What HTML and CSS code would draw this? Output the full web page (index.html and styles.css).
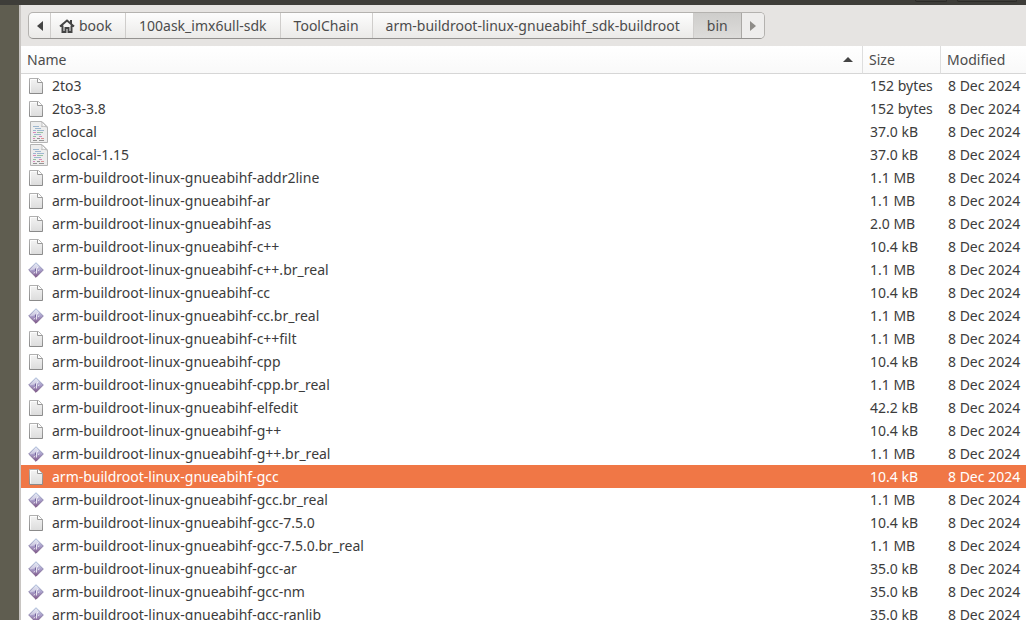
FILE: index.html
```html
<!doctype html>
<html lang="en">
<head>
<meta charset="utf-8"/>
<title>bin</title>
<link rel="stylesheet" href="styles.css">
</head>
<body>
<svg class="defs" aria-hidden="true">
	<defs>
		<linearGradient id="paper" x1="0" y1="0" x2="0" y2="1">
			<stop offset="0" stop-color="#f4f4f4"/>
			<stop offset="1" stop-color="#dcdcdc"/>
		</linearGradient>
		<linearGradient id="edge" x1="0" y1="0" x2="0" y2="1">
			<stop offset="0" stop-color="#b0b0b0"/>
			<stop offset="1" stop-color="#8a8a8a"/>
		</linearGradient>
		<linearGradient id="gem" x1="0" y1="0" x2="0" y2="1">
			<stop offset="0" stop-color="#d9e3f2"/>
			<stop offset="0.5" stop-color="#aaa0cb"/>
			<stop offset="1" stop-color="#7d5588"/>
		</linearGradient>
		<linearGradient id="gemEdge" x1="0" y1="0" x2="0" y2="1">
			<stop offset="0" stop-color="#a9bddb"/>
			<stop offset="1" stop-color="#75507f"/>
		</linearGradient>
	</defs>
	<symbol id="file" viewBox="0 0 16 16">
		<path d="M1.5 .5H10.500L14.500 4.500V15.500H1.500Z" fill="url(#paper)" stroke="url(#edge)"/>
		<path d="M2.500 14.500V1.500H9" fill="none" stroke="#fff" opacity=".8"/>
		<path d="M9.500 .5V4.500H14.500" fill="#fff" stroke="#999"/>
	</symbol>
	<symbol id="text" viewBox="0 0 20 22">
		<path d="M2.500 .5H14L19.500 6V21.500H2.500Z" fill="#ededed" stroke="#b4b4b4"/>
		<path d="M13.500 .5C14.500 3 14 5 13.500 5.500C16 5 18 5.500 19.500 6.500Z" fill="#fff" stroke="#bbb"/>
		<g fill="none" opacity=".75">
			<path d="M5 5.500H11M7 7.500H13M5 9.500H8M9 9.500H16M6 13.500H13" stroke="#83a6c6"/>
			<path d="M5 11.500H8M11 15.500H14M5 17.500H7" stroke="#d16aab"/>
			<path d="M9 11.500H15M5 15.500H8" stroke="#7db28a"/>
			<path d="M5 19.500H9M11 19.500H16M9 17.500H12" stroke="#777"/>
			<path d="M13 17.500H16" stroke="#d77878"/>
		</g>
	</symbol>
	<symbol id="exec" viewBox="0 0 16 16">
		<path d="M8 .7L15.300 8L8 15.300L.7 8Z" fill="url(#gem)" stroke="url(#gemEdge)" stroke-linejoin="round"/>
		<path d="M8 1.500L1.500 8C5 9 8 6 11.500 5Z" fill="#fff" opacity=".4"/>
		<path d="M10 5L8.500 7V11.500M6.500 10L6 11.500M11 7.500L10.500 9" fill="none" stroke="#fff" opacity=".75"/>
		<path d="M7.500 6.500V9" fill="none" stroke="#75659c"/>
	</symbol>
</svg>
<div class="desktop">
	<div class="titlebar"><span class="tool"></span><span class="tool wide"></span></div>
	<main class="window">
		<nav class="toolbar" aria-label="Location">
			<div class="path">
				<button class="arrow" aria-label="Back"><svg width="6" height="10" viewBox="0 0 6 10"><path d="M6 0V10L0 5Z" fill="#444"/></svg></button>
				<button class="home"><svg width="16" height="14" viewBox="0 0 16 14"><path d="M1 7.500L8 1.500L15 7.500M3.500 6.500V13H6.500V9H9.500V13H12.500V6.500" fill="none" stroke="#444" stroke-width="2"/><path d="M11 1H13V5H11Z" fill="#444"/></svg>book</button>
				<button>100ask_imx6ull-sdk</button>
				<button>ToolChain</button>
				<button>arm-buildroot-linux-gnueabihf_sdk-buildroot</button>
				<button class="current">bin</button>
				<button class="arrow next" aria-label="Forward"><svg width="6" height="10" viewBox="0 0 6 10"><path d="M0 0V10L6 5Z" fill="#8e8c88"/></svg></button>
			</div>
		</nav>
		<table class="files">
			<colgroup><col><col class="col-size"><col class="col-date"></colgroup>
			<thead>
				<tr>
					<th><button class="sort">Name<svg width="10" height="5" viewBox="0 0 10 5"><path d="M0 5L5 0L10 5Z" fill="#444"/></svg></button></th>
					<th><button class="sort">Size</button></th>
					<th><button class="sort">Modified</button></th>
				</tr>
			</thead>
			<tbody>
				<tr><td><span class="name"><svg class="icon"><use href="#file"/></svg>2to3</span></td><td>152 bytes</td><td>8 Dec 2024</td></tr>
				<tr><td><span class="name"><svg class="icon"><use href="#file"/></svg>2to3-3.8</span></td><td>152 bytes</td><td>8 Dec 2024</td></tr>
				<tr><td><span class="name"><svg class="icon text"><use href="#text"/></svg>aclocal</span></td><td>37.0 kB</td><td>8 Dec 2024</td></tr>
				<tr><td><span class="name"><svg class="icon text"><use href="#text"/></svg>aclocal-1.15</span></td><td>37.0 kB</td><td>8 Dec 2024</td></tr>
				<tr><td><span class="name"><svg class="icon"><use href="#file"/></svg>arm-buildroot-linux-gnueabihf-addr2line</span></td><td>1.1 MB</td><td>8 Dec 2024</td></tr>
				<tr><td><span class="name"><svg class="icon"><use href="#file"/></svg>arm-buildroot-linux-gnueabihf-ar</span></td><td>1.1 MB</td><td>8 Dec 2024</td></tr>
				<tr><td><span class="name"><svg class="icon"><use href="#file"/></svg>arm-buildroot-linux-gnueabihf-as</span></td><td>2.0 MB</td><td>8 Dec 2024</td></tr>
				<tr><td><span class="name"><svg class="icon"><use href="#file"/></svg>arm-buildroot-linux-gnueabihf-c++</span></td><td>10.4 kB</td><td>8 Dec 2024</td></tr>
				<tr><td><span class="name"><svg class="icon"><use href="#exec"/></svg>arm-buildroot-linux-gnueabihf-c++.br_real</span></td><td>1.1 MB</td><td>8 Dec 2024</td></tr>
				<tr><td><span class="name"><svg class="icon"><use href="#file"/></svg>arm-buildroot-linux-gnueabihf-cc</span></td><td>10.4 kB</td><td>8 Dec 2024</td></tr>
				<tr><td><span class="name"><svg class="icon"><use href="#exec"/></svg>arm-buildroot-linux-gnueabihf-cc.br_real</span></td><td>1.1 MB</td><td>8 Dec 2024</td></tr>
				<tr><td><span class="name"><svg class="icon"><use href="#file"/></svg>arm-buildroot-linux-gnueabihf-c++filt</span></td><td>1.1 MB</td><td>8 Dec 2024</td></tr>
				<tr><td><span class="name"><svg class="icon"><use href="#file"/></svg>arm-buildroot-linux-gnueabihf-cpp</span></td><td>10.4 kB</td><td>8 Dec 2024</td></tr>
				<tr><td><span class="name"><svg class="icon"><use href="#exec"/></svg>arm-buildroot-linux-gnueabihf-cpp.br_real</span></td><td>1.1 MB</td><td>8 Dec 2024</td></tr>
				<tr><td><span class="name"><svg class="icon"><use href="#file"/></svg>arm-buildroot-linux-gnueabihf-elfedit</span></td><td>42.2 kB</td><td>8 Dec 2024</td></tr>
				<tr><td><span class="name"><svg class="icon"><use href="#file"/></svg>arm-buildroot-linux-gnueabihf-g++</span></td><td>10.4 kB</td><td>8 Dec 2024</td></tr>
				<tr><td><span class="name"><svg class="icon"><use href="#exec"/></svg>arm-buildroot-linux-gnueabihf-g++.br_real</span></td><td>1.1 MB</td><td>8 Dec 2024</td></tr>
				<tr class="selected"><td><span class="name"><svg class="icon"><use href="#file"/></svg>arm-buildroot-linux-gnueabihf-gcc</span></td><td>10.4 kB</td><td>8 Dec 2024</td></tr>
				<tr><td><span class="name"><svg class="icon"><use href="#exec"/></svg>arm-buildroot-linux-gnueabihf-gcc.br_real</span></td><td>1.1 MB</td><td>8 Dec 2024</td></tr>
				<tr><td><span class="name"><svg class="icon"><use href="#file"/></svg>arm-buildroot-linux-gnueabihf-gcc-7.5.0</span></td><td>10.4 kB</td><td>8 Dec 2024</td></tr>
				<tr><td><span class="name"><svg class="icon"><use href="#exec"/></svg>arm-buildroot-linux-gnueabihf-gcc-7.5.0.br_real</span></td><td>1.1 MB</td><td>8 Dec 2024</td></tr>
				<tr><td><span class="name"><svg class="icon"><use href="#exec"/></svg>arm-buildroot-linux-gnueabihf-gcc-ar</span></td><td>35.0 kB</td><td>8 Dec 2024</td></tr>
				<tr><td><span class="name"><svg class="icon"><use href="#exec"/></svg>arm-buildroot-linux-gnueabihf-gcc-nm</span></td><td>35.0 kB</td><td>8 Dec 2024</td></tr>
				<tr><td><span class="name"><svg class="icon"><use href="#exec"/></svg>arm-buildroot-linux-gnueabihf-gcc-ranlib</span></td><td>35.0 kB</td><td>8 Dec 2024</td></tr>
			</tbody>
		</table>
	</main>
</div>
</body>
</html>
```
FILE: styles.css
```css
* {
	box-sizing: border-box;
}
body {
	margin: 0;
	font: 14px/23px "Noto Sans", "Open Sans", sans-serif;
	color: #3c3c3c;
	background: #5f5d50;
}
button {
	margin: 0;
	border: none;
	background: none;
	font: inherit;
	color: #4c4c4c;
	white-space: nowrap;
}
.defs {
	position: absolute;
	width: 0;
	height: 0;
}
.desktop {
	height: 100vh;
	overflow: hidden;
}
.titlebar {
	display: flex;
	justify-content: flex-end;
	gap: 10px;
	height: 5px;
	padding-right: 9px;
	background: #3e3d39;
}
.tool {
	width: 32px;
	height: 2px;
	border: 1px solid #2c2b28;
	border-top: none;
	border-radius: 0 0 3px 3px;
}
.wide {
	width: 60px;
}
.window {
	margin-left: 19px;
	border-left: 2px solid #c8c5c2;
	background: #fff;
}
.toolbar {
	display: flex;
	height: 41px;
	padding: 7px;
	background: #e6e4e2;
}
.path {
	display: flex;
	border: 1px solid #b4b2af;
	border-bottom-color: #949290;
	border-radius: 5px;
	background: linear-gradient(#fdfdfd, #ebeae8);
	overflow: hidden;
}
.path button {
	display: flex;
	align-items: center;
	justify-content: center;
	padding: 0 13px;
	border-right: 1px solid #cfcdcb;
}
.path .arrow {
	width: 22px;
	padding: 0;
}
.path .home {
	gap: 4px;
	padding: 0 13px 0 8px;
}
.path .current {
	border-right-color: #aaa8a5;
	background: linear-gradient(#cecdcb, #dddcda);
}
.path .next {
	border-right: none;
	background: #eeedec;
}
.files {
	width: 100%;
	table-layout: fixed;
	border-collapse: separate;
	border-spacing: 0;
}
.col-size {
	width: 78px;
}
.col-date {
	width: 86px;
}
th {
	height: 28px;
	padding: 0;
	border-bottom: 1px solid #d6d6d6;
	background: linear-gradient(#fff, #f9f9f9);
	font-weight: normal;
}
th + th {
	border-left: 1px solid #dedede;
}
.sort {
	display: flex;
	align-items: center;
	justify-content: space-between;
	width: 100%;
	padding: 0 9px 0 6px;
}
td {
	height: 23px;
	padding: 0 0 0 8px;
	white-space: nowrap;
}
td:first-child {
	padding-left: 7px;
}
.name {
	display: flex;
	align-items: center;
}
.icon {
	flex: none;
	width: 16px;
	height: 16px;
	margin-right: 8px;
}
.icon.text {
	width: 20px;
	height: 22px;
	margin-right: 4px;
}
.selected {
	background: #f07746;
	color: #fff;
}
```
